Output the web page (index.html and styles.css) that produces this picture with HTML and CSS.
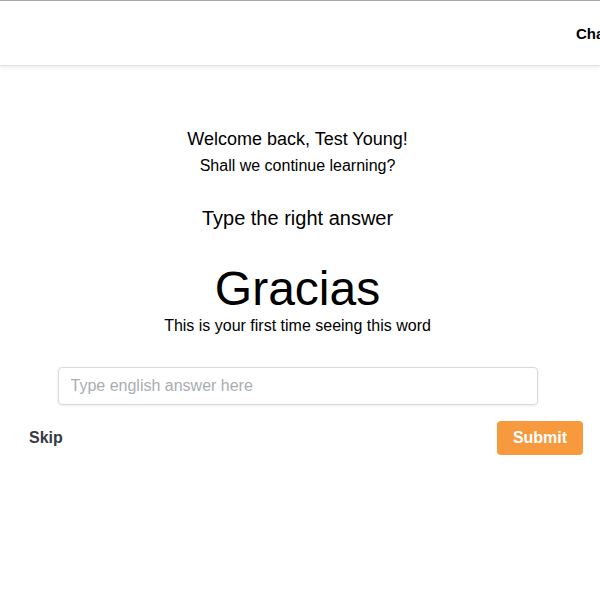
FILE: index.html
```html
<!DOCTYPE html>
<html>
<head>
<meta charset="utf-8">
<link rel="stylesheet" href="styles.css">
</head>
<body>
<header class="topbar">
  <nav class="nav">
    <span class="nav-link">Challenges</span>
  </nav>
</header>
<main class="main">
  <p class="welcome">Welcome back, Test Young!</p>
  <p class="sub">Shall we continue learning?</p>
  <h2 class="prompt">Type the right answer</h2>
  <h1 class="word">Gracias</h1>
  <p class="note">This is your first time seeing this word</p>
  <div class="input-row">
    <input class="answer" type="text" placeholder="Type english answer here">
  </div>
  <div class="actions">
    <button class="skip">Skip</button>
    <button class="submit">Submit</button>
  </div>
</main>
</body>
</html>
```
FILE: styles.css
```css
html, body {
  margin: 0;
  padding: 0;
  background: #fff;
  overflow: hidden;
}
body {
  font-family: "Liberation Sans", Arial, sans-serif;
  color: #000;
  width: 600px;
}
.topbar {
  height: 64px;
  border-top: 1px solid #aaaaaa;
  border-bottom: 1px solid #e2e2e2;
  box-shadow: 0 2px 3px rgba(0,0,0,0.06);
  display: flex;
  justify-content: flex-end;
  align-items: center;
  overflow: hidden;
}
.nav {
  display: flex;
  margin-right: -100px;
  width: 124px;
}
.nav-link {
  font-weight: bold;
  font-size: 15px;
  color: #000;
  white-space: nowrap;
}
.main {
  display: flex;
  flex-direction: column;
  align-items: center;
  width: 595px;
  padding-top: 62px;
}
.welcome {
  margin: 0;
  font-size: 18px;
  line-height: 22px;
}
.sub {
  margin: 6px 0 0;
  font-size: 16px;
  line-height: 20px;
}
.prompt {
  margin: 30px 0 0;
  font-size: 20px;
  font-weight: normal;
  line-height: 24px;
}
.word {
  margin: 32px 0 0;
  font-size: 48px;
  font-weight: normal;
  line-height: 54px;
}
.note {
  margin: 0;
  font-size: 16px;
  line-height: 20px;
}
.input-row {
  margin-top: 31px;
  display: flex;
  justify-content: center;
  width: 100%;
}
.answer {
  box-sizing: border-box;
  width: 480px;
  height: 38px;
  border: 1px solid #d5dbe2;
  border-radius: 4px;
  box-shadow: 0 1px 3px rgba(0,0,0,0.08);
  padding: 0 12px;
  font-family: "Liberation Sans", Arial, sans-serif;
  font-size: 16px;
  outline: none;
}
.answer::placeholder {
  color: #a9adb3;
}
.actions {
  align-self: flex-start;
  box-sizing: border-box;
  display: flex;
  justify-content: space-between;
  align-items: center;
  margin-top: 16px;
  padding-left: 19px;
  width: 583px;
}
.skip {
  background: none;
  border: none;
  font-family: "Liberation Sans", Arial, sans-serif;
  font-weight: bold;
  font-size: 16px;
  color: #363a45;
  padding: 0 10px;
  cursor: pointer;
}
.submit {
  background: #f79a3e;
  border: none;
  border-radius: 4px;
  font-family: "Liberation Sans", Arial, sans-serif;
  font-weight: bold;
  font-size: 16px;
  color: #fff;
  width: 86px;
  height: 34px;
  cursor: pointer;
}
```
